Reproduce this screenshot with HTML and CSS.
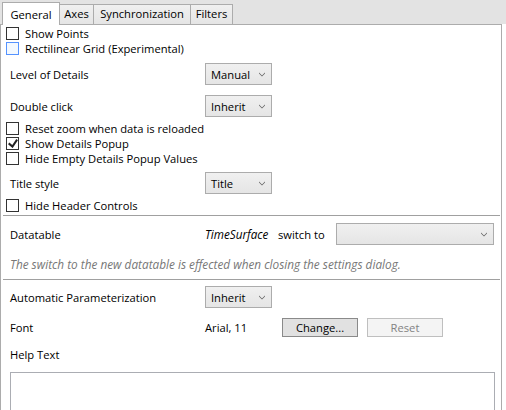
FILE: index.html
```html
<!DOCTYPE html>
<html>
<head>
<meta charset="utf-8">
<link rel="stylesheet" href="styles.css">
</head>
<body>
<div class="window">
  <div class="tabstrip">
    <div class="tab tab-general selected">General</div>
    <div class="tab tab-axes">Axes</div>
    <div class="tab tab-sync">Synchronization</div>
    <div class="tab tab-filters">Filters</div>
  </div>
  <div class="panel">
    <div class="check first"><span class="box"></span><span class="cap">Show Points</span></div>
    <div class="check"><span class="box hover"></span><span class="cap">Rectilinear Grid (Experimental)</span></div>

    <div class="row lod"><span class="label">Level of Details</span><div class="combo"><span>Manual</span><svg class="chev" width="6" height="5" viewBox="0 0 6 5"><path d="M0 0.6 L3 3.6 L6 0.6 L6 1.6 L3 4.6 L0 1.6 Z" fill="#606060"/></svg></div></div>
    <div class="row dbl"><span class="label">Double click</span><div class="combo"><span>Inherit</span><svg class="chev" width="6" height="5" viewBox="0 0 6 5"><path d="M0 0.6 L3 3.6 L6 0.6 L6 1.6 L3 4.6 L0 1.6 Z" fill="#606060"/></svg></div></div>

    <div class="check reset"><span class="box"></span><span class="cap">Reset zoom when data is reloaded</span></div>
    <div class="check"><span class="box"><svg class="tick" width="10" height="9" viewBox="0 0 10 9.1"><path d="M9.975 1.223 L4.698 9.098 L4.522 9.098 L0 5.193 L1.277 3.522 L4.255 6.088 L8.333 0 Z" fill="#212121"/></svg></span><span class="cap">Show Details Popup</span></div>
    <div class="check"><span class="box"></span><span class="cap">Hide Empty Details Popup Values</span></div>

    <div class="row title"><span class="label">Title style</span><div class="combo"><span>Title</span><svg class="chev" width="6" height="5" viewBox="0 0 6 5"><path d="M0 0.6 L3 3.6 L6 0.6 L6 1.6 L3 4.6 L0 1.6 Z" fill="#606060"/></svg></div></div>

    <div class="check header"><span class="box"></span><span class="cap">Hide Header Controls</span></div>

    <div class="sep sep1"></div>

    <div class="row datatable">
      <span class="label">Datatable</span>
      <div class="dt-right">
        <span class="dt-name">TimeSurface</span>
        <span class="dt-switch">switch to</span>
        <div class="combo wide"><span></span><svg class="chev" width="6" height="5" viewBox="0 0 6 5"><path d="M0 0.6 L3 3.6 L6 0.6 L6 1.6 L3 4.6 L0 1.6 Z" fill="#606060"/></svg></div>
      </div>
    </div>
    <div class="note">The switch to the new datatable is effected when closing the settings dialog.</div>

    <div class="sep sep2"></div>

    <div class="row auto"><span class="label">Automatic Parameterization</span><div class="combo"><span>Inherit</span><svg class="chev" width="6" height="5" viewBox="0 0 6 5"><path d="M0 0.6 L3 3.6 L6 0.6 L6 1.6 L3 4.6 L0 1.6 Z" fill="#606060"/></svg></div></div>

    <div class="row font">
      <span class="label">Font</span>
      <div class="font-right">
        <span class="font-val">Arial, 11</span>
        <div class="btn">Change...</div>
        <div class="btn disabled">Reset</div>
      </div>
    </div>

    <div class="help-label">Help Text</div>
    <div class="textarea"></div>
  </div>
</div>
</body>
</html>
```
FILE: styles.css
```css
* { box-sizing: border-box; }
html, body {
  margin: 0;
  padding: 0;
  background: #ffffff;
  overflow: hidden;
}
body {
  width: 506px;
  height: 410px;
  font-family: "Open Sans", "Noto Sans", sans-serif;
  font-size: 11.2px;
  color: #000;
}
.window {
  width: 506px;
  height: 410px;
  overflow: hidden;
  background: linear-gradient(#e3e3e3 0, #e3e3e3 24px, #ffffff 24px);
}
.tabstrip {
  display: flex;
  align-items: flex-end;
  height: 25px;
  padding-left: 2px;
  margin-bottom: -1px;
}
.tab {
  height: 21px;
  border: 1px solid #acacac;
  background: linear-gradient(#f0f0f0, #e5e5e5);
  display: flex;
  align-items: center;
  justify-content: center;
  margin-left: -1px;
  line-height: 1;
  padding-bottom: 1px;
}
.tab.selected {
  height: 23px;
  margin-left: 0;
  background: #ffffff;
  border-bottom: none;
  position: relative;
  z-index: 2;
  padding-bottom: 0;
  padding-top: 1px;
}
.tab-general { width: 58px; }
.tab-axes { width: 35px; }
.tab-sync { width: 98px; }
.tab-filters { width: 43px; }

.panel {
  width: 502px;
  height: 386px;
  border: 1px solid #acacac;
  border-bottom: none;
  background: #ffffff;
  padding-top: 1px;
  overflow: hidden;
  position: relative;
  z-index: 1;
}

.check {
  display: flex;
  align-items: center;
  height: 15px;
  padding-left: 5px;
}
.box {
  width: 13px;
  height: 13px;
  border: 1px solid #333333;
  background: #ffffff;
  display: flex;
  align-items: center;
  justify-content: center;
  flex: none;
}
.box.hover {
  border-color: #5593ff;
  background: #f3f9ff;
}
.tick { display: block; }
.cap {
  margin-left: 6px;
  white-space: nowrap;
}
.check.reset { margin-top: 4px; }
.check.header { margin-top: 4px; }

.row {
  display: flex;
  align-items: center;
  padding-left: 9px;
  height: 22px;
}
.label {
  width: 195px;
  flex: none;
  white-space: nowrap;
}
.row.lod { margin-top: 7px; }
.row.dbl { margin-top: 10px; }
.row.title { margin-top: 6px; }

.combo {
  width: 67px;
  height: 22px;
  border: 1px solid #acacac;
  background: linear-gradient(#f0f0f0, #e5e5e5);
  display: flex;
  align-items: center;
  justify-content: space-between;
  padding: 0 6px 0 5px;
  flex: none;
}
.combo.wide { width: 158px; }
.chev { display: block; }

.sep {
  height: 1px;
  background: #a0a0a0;
  margin-left: 2px;
  margin-right: 1px;
}
.sep1 { margin-top: 2px; }
.sep2 { margin-top: 7px; }

.row.datatable { margin-top: 7px; }
.dt-right {
  display: flex;
  align-items: center;
}
.dt-name {
  font-style: italic;
  font-size: 11.7px;
  width: 73px;
}
.dt-switch { width: 58px; }

.note {
  margin-top: 12px;
  padding-left: 9px;
  height: 15px;
  line-height: 15px;
  font-style: italic;
  font-size: 11.8px;
  color: #777777;
  white-space: nowrap;
}

.row.auto { margin-top: 6px; }
.row.font { margin-top: 10px; height: 19px; }
.font-right {
  display: flex;
  align-items: center;
}
.font-val { width: 77px; }
.btn {
  width: 76px;
  height: 19px;
  border: 1px solid #8a8a8a;
  background: #e1e1e1;
  display: flex;
  align-items: center;
  justify-content: center;
  margin-right: 9px;
}
.btn.disabled {
  border-color: #bfbfbf;
  background: #f4f4f4;
  color: #838383;
}

.help-label {
  margin-top: 10px;
  padding-left: 9px;
  height: 15px;
  line-height: 15px;
}
.textarea {
  margin-top: 10px;
  margin-left: 9px;
  width: 485px;
  height: 60px;
  border: 1px solid #abadb3;
  background: #ffffff;
}
```
